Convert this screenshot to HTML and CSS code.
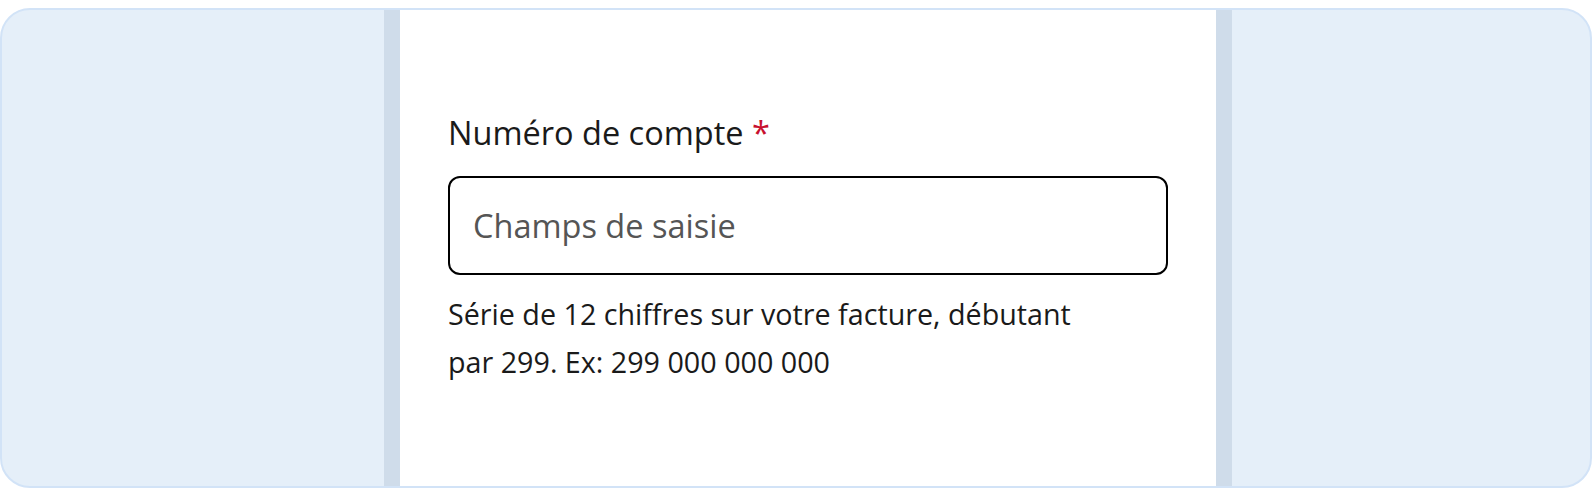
FILE: index.html
```html
<!DOCTYPE html>
<html lang="fr">

<head>
    <meta charset="UTF-8">
    <meta name="viewport" content="width=device-width, initial-scale=1.0">
    <title>Numéro de compte</title>
    <link rel="stylesheet" href="styles.css">
</head>

<body>
    <div class="frame">
        <div class="panel">
            <div class="field">
                <label class="field-label" for="account">Numéro de compte <span class="required">*</span></label>
                <input class="field-input" type="text" id="account" placeholder="Champs de saisie">
                <p class="field-help">Série de 12 chiffres sur votre facture, débutant par 299. Ex: 299 000 000 000</p>
            </div>
        </div>
    </div>
</body>

</html>
```

FILE: styles.css
```css
body {
    margin: 8px 0 0;
    background-color: #fff;
    font-family: "Open Sans", "Noto Sans", Arial, sans-serif;
}

.frame {
    box-sizing: border-box;
    height: 480px;
    background-color: #e5eff9;
    border: 2px solid #d2e3f7;
    border-radius: 30px;
    overflow: hidden;
}

.panel {
    box-sizing: border-box;
    width: 848px;
    height: 100%;
    margin-left: 382px;
    padding: 101px 48px 0;
    background-color: #fff;
    border-left: 16px solid #cfdcea;
    border-right: 16px solid #cfdcea;
}

.field {
    display: flex;
    flex-direction: column;
}

.field-label {
    font-size: 32.5px;
    line-height: 44px;
    color: #1a1a1a;
}

.required {
    color: #c8102e;
}

.field-input {
    box-sizing: border-box;
    height: 99px;
    margin-top: 21px;
    padding: 0 23px;
    font-family: inherit;
    font-size: 32.5px;
    color: #1a1a1a;
    border: 2px solid #000;
    border-radius: 12px;
    outline: none;
}

.field-input::placeholder {
    color: #555;
}

.field-help {
    max-width: 650px;
    margin: 15px 0 0;
    font-size: 28.7px;
    line-height: 48px;
    color: #1a1a1a;
}
```
